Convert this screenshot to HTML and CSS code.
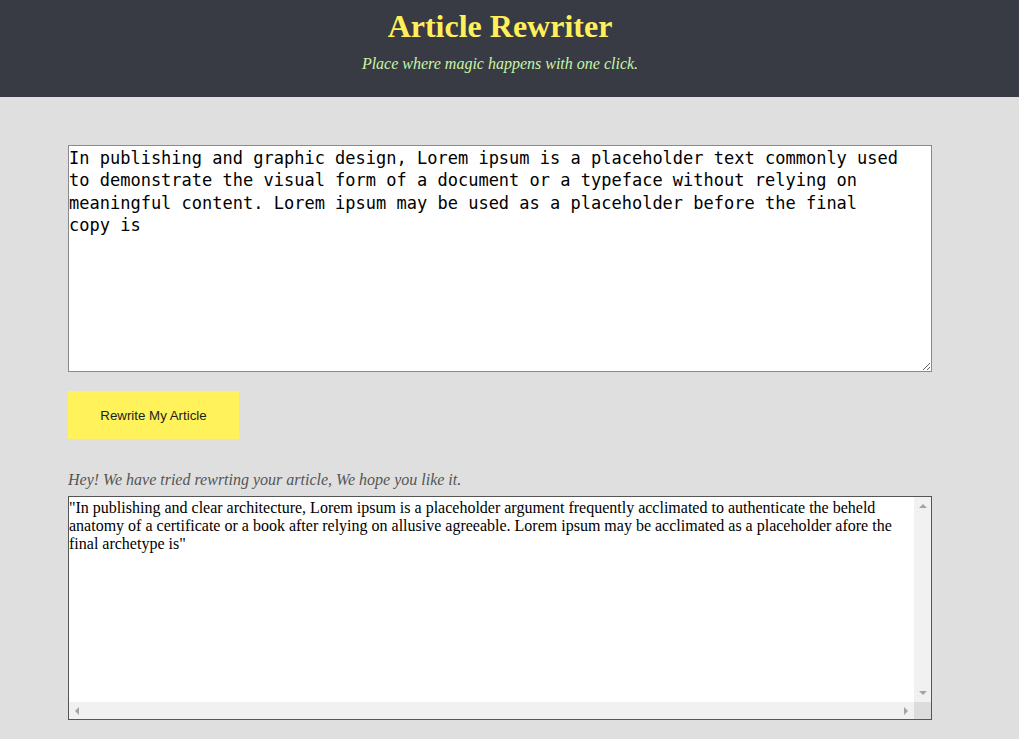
FILE: index.html
```html
<!DOCTYPE html>
<html>
<head>
<meta charset="utf-8">
<title>Article Rewriter</title>
<link rel="stylesheet" href="styles.css">
</head>
<body>
<header class="top">
  <h1 class="title">Article Rewriter</h1>
  <p class="tagline">Place where magic happens with one click.</p>
</header>
<main class="content">
  <textarea class="input">In publishing and graphic design, Lorem ipsum is a placeholder text commonly used to demonstrate the visual form of a document or a typeface without relying on meaningful content. Lorem ipsum may be used as a placeholder before the final copy is</textarea>
  <button class="rewrite">Rewrite My Article</button>
  <p class="note">Hey! We have tried rewrting your article, We hope you like it.</p>
  <div class="output">
    <div class="output-text">"In publishing and clear architecture, Lorem ipsum is a placeholder argument frequently acclimated to authenticate the beheld anatomy of a certificate or a book after relying on allusive agreeable. Lorem ipsum may be acclimated as a placeholder afore the final archetype is"</div>
    <div class="vbar"><span class="arr up"></span><span class="arr down"></span></div>
    <div class="hbar"><span class="arr left"></span><span class="arr right"></span></div>
    <div class="corner"></div>
  </div>
</main>
</body>
</html>
```
FILE: styles.css
```css
html, body {
  margin: 0;
  padding: 0;
}
body {
  background: #dfdfdf;
  font-family: "Liberation Serif", serif;
  height: 739px;
  overflow: hidden;
}
.top {
  background: #383b44;
  height: 97px;
  box-sizing: border-box;
  padding: 8px 19px 0 0;
  text-align: center;
}
.title {
  margin: 0;
  font-size: 32px;
  line-height: 37px;
  font-weight: bold;
  color: #fff05a;
}
.tagline {
  margin: 10px 0 0;
  font-size: 16px;
  line-height: 18px;
  font-style: italic;
  color: #c9f5a6;
}
.content {
  padding: 48px 0 0 68px;
  display: flex;
  flex-direction: column;
  align-items: flex-start;
}
.input {
  width: 864px;
  height: 227px;
  box-sizing: border-box;
  margin: 0;
  padding: 1px 30px 0 0;
  border: 1px solid #8a8a8a;
  background: #fff;
  font-family: "DejaVu Sans Mono", monospace;
  font-size: 17px;
  line-height: 22.4px;
  color: #000;
  resize: both;
  overflow: hidden;
}
.rewrite {
  margin-top: 19px;
  width: 171px;
  height: 48px;
  border: none;
  background: #fff25a;
  font-family: "Liberation Sans", Arial, sans-serif;
  font-size: 13.3px;
  color: #222;
  cursor: pointer;
}
.note {
  margin: 32px 0 0;
  font-size: 16px;
  line-height: 18px;
  font-style: italic;
  color: #555;
}
.output {
  margin-top: 7px;
  width: 864px;
  height: 224px;
  box-sizing: border-box;
  border: 1px solid #555;
  background: #fff;
  display: grid;
  grid-template-columns: 1fr 17px;
  grid-template-rows: 1fr 17px;
}
.output-text {
  padding: 2px 0 0 0;
  font-size: 16px;
  line-height: 18px;
  color: #000;
  overflow: hidden;
}
.vbar, .hbar {
  background: #f1f1f1;
  display: flex;
  justify-content: space-between;
  align-items: center;
}
.vbar {
  flex-direction: column;
  padding: 7px 0;
}
.hbar {
  padding: 0 6px;
}
.corner {
  background: #dcdcdc;
}
.arr {
  width: 0;
  height: 0;
  border-style: solid;
  border-color: transparent;
}
.up {
  border-width: 0 4px 4px 4px;
  border-bottom-color: #a3a3a3;
}
.down {
  border-width: 4px 4px 0 4px;
  border-top-color: #a3a3a3;
}
.left {
  border-width: 4px 4px 4px 0;
  border-right-color: #a3a3a3;
}
.right {
  border-width: 4px 0 4px 4px;
  border-left-color: #a3a3a3;
}
```
